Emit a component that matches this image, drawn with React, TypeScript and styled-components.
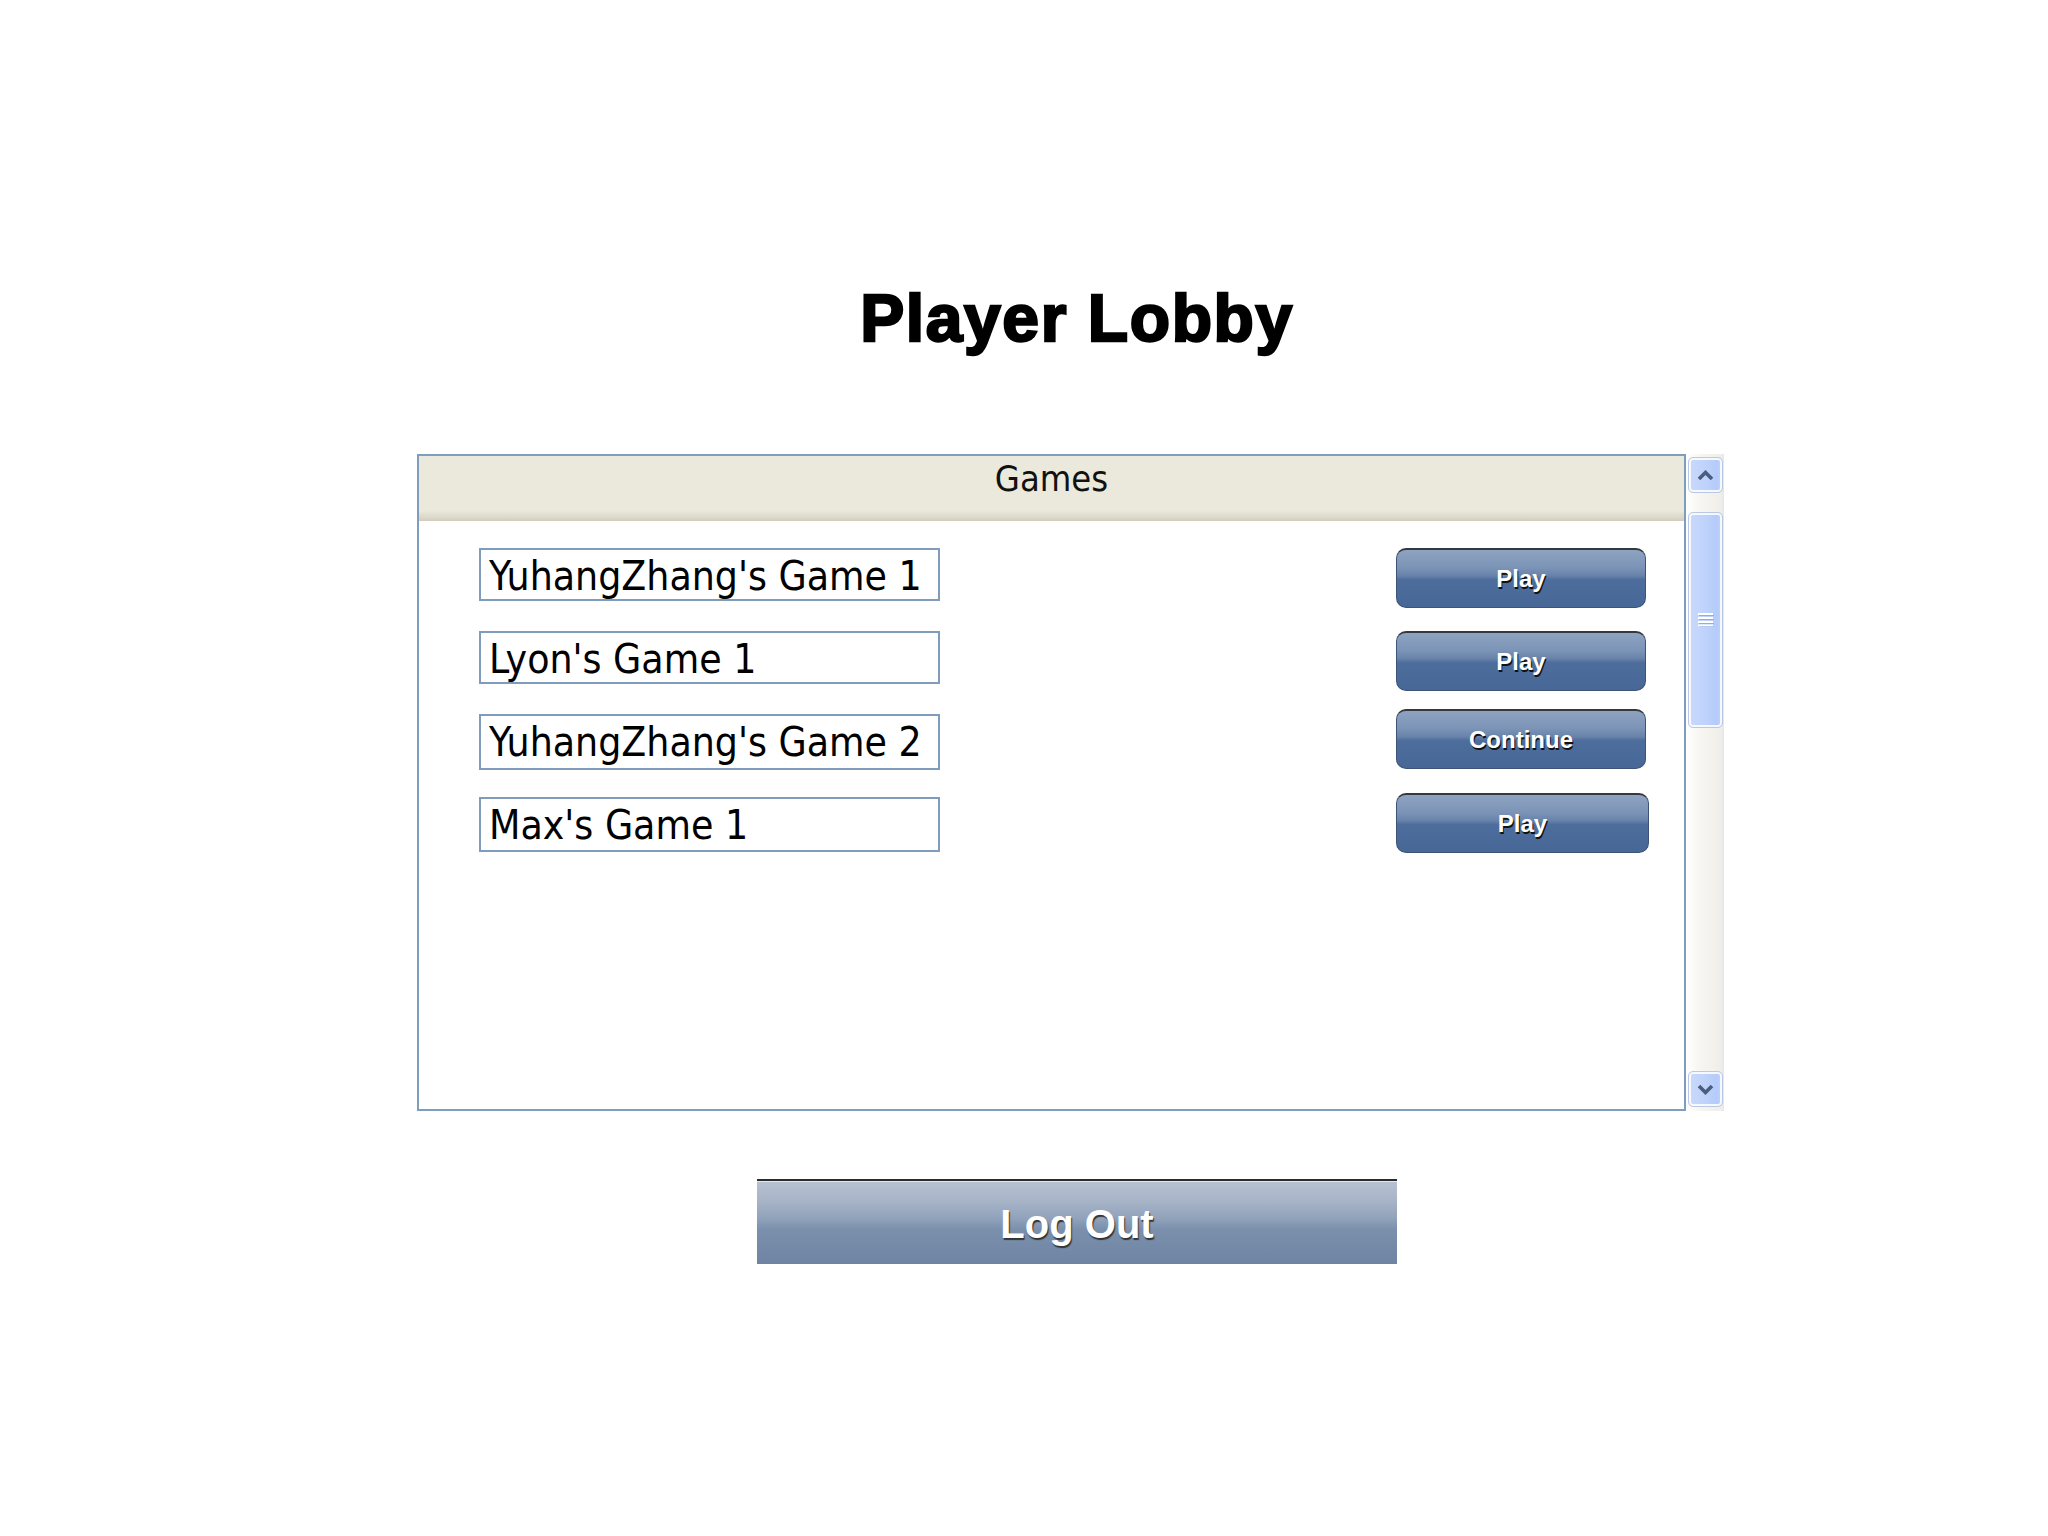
import React from "react";
import styled, { createGlobalStyle } from "styled-components";

const GlobalStyle = createGlobalStyle`
  html, body { margin: 0; padding: 0; background: #ffffff; }
  body { font-family: "Liberation Sans", Arial, sans-serif; }
  * { box-sizing: border-box; }
`;

const Page = styled.div`
  padding: 284px 0 0 417px;
  min-height: 1536px;
`;

const Column = styled.div`
  width: 1320px;
  display: flex;
  flex-direction: column;
  align-items: center;
`;

const Title = styled.h1`
  margin: 0 0 102px 0;
  height: 68px;
  line-height: 68px;
  font-family: "Liberation Sans", Arial, sans-serif;
  font-size: 66px;
  font-weight: 700;
  letter-spacing: 1.6px;
  -webkit-text-stroke: 2.4px #000;
  color: #000;
`;

const ListFrame = styled.div`
  align-self: flex-start;
  display: flex;
  width: 1307px;
  height: 657px;
`;

const Table = styled.div`
  width: 1269px;
  height: 100%;
  border: 2px solid #7f9dbd;
  display: flex;
  flex-direction: column;
  background: #fff;
`;

const Header = styled.div`
  height: 65px;
  background: linear-gradient(to bottom, #ebe9dc 0%, #ebe9dc 84%, #dcd8ca 94%, #d2cdbf 100%);
  text-align: center;
  font-family: "DejaVu Sans Condensed", "DejaVu Sans", sans-serif;
  font-stretch: condensed;
  font-size: 36px;
  line-height: 46px;
  color: #111;
`;

const Rows = styled.div`
  display: flex;
  flex-direction: column;
  gap: 23px;
  padding: 27px 34px 0 60px;
`;

const Row = styled.div`
  display: grid;
  grid-template-columns: 461px 1fr 254px;
  align-items: start;
  height: 60px;
`;

const NameBox = styled.div<{ $h: number }>`
  grid-column: 1;
  height: ${(p) => p.$h}px;
  border: 2px solid #7f9cbd;
  padding-left: 8px;
  font-family: "DejaVu Sans Condensed", "DejaVu Sans", sans-serif;
  font-stretch: condensed;
  font-size: 40.5px;
  line-height: 53px;
  color: #000;
  white-space: nowrap;
`;

const ActionButton = styled.button<{ $w: number; $shift: number }>`
  grid-column: 3;
  justify-self: start;
  width: ${(p) => p.$w}px;
  height: 60px;
  margin: ${(p) => p.$shift}px 0 0 0;
  padding: 0;
  border: 1px solid #3d5377;
  border-top: 2px solid #34383f;
  border-radius: 10px;
  background: linear-gradient(
    to bottom,
    #8ea3c0 0%,
    #7c94b7 30%,
    #6883aa 45%,
    #4d6d9c 52%,
    #476896 100%
  );
  color: #fff;
  font-family: "Liberation Sans", Arial, sans-serif;
  font-weight: 700;
  font-size: 24px;
  text-shadow: 1px 2px 0 #111;
  cursor: pointer;
`;

const Scrollbar = styled.div`
  width: 38px;
  height: 100%;
  display: flex;
  flex-direction: column;
  padding: 3px 1px 4px 2px;
  background: linear-gradient(to right, #ffffff 0%, #f7f6f2 35%, #efeee9 92%, #e4e6ea 100%);
`;

const ScrollPart = styled.div<{ $h: number; $gap?: number }>`
  height: ${(p) => p.$h}px;
  margin-top: ${(p) => p.$gap ?? 0}px;
  border: 1px solid #b9c8e4;
  border-radius: 5px;
  background: linear-gradient(to right, #c9d9fb 0%, #c0d3fb 45%, #b4cbfa 85%, #c4d4f6 100%);
  box-shadow: inset 0 0 0 2px rgba(255, 255, 255, 0.85);
  display: flex;
  align-items: center;
  justify-content: center;
`;

const Spacer = styled.div`
  flex: 1;
`;

const LogOut = styled.button`
  margin-top: 68px;
  width: 640px;
  height: 85px;
  padding: 3px 0 0 0;
  border: none;
  border-top: 2px solid #2b2b2b;
  box-shadow: inset 0 1px 0 #e2e7ee;
  background: linear-gradient(
    to bottom,
    #b7c2d2 0%,
    #a6b3c7 25%,
    #91a2bb 45%,
    #7b90ad 58%,
    #6f84a2 100%
  );
  color: #fff;
  font-family: "Liberation Sans", Arial, sans-serif;
  font-weight: 700;
  font-size: 40px;
  text-shadow: 1px 2px 1px #333;
  cursor: pointer;
`;

const Chevron = ({ up }: { up: boolean }) => (
  <svg width="17" height="11" viewBox="0 0 17 11">
    <polyline
      points={up ? "2,9 8.5,2.5 15,9" : "2,2 8.5,8.5 15,2"}
      fill="none"
      stroke="#4b5d7e"
      strokeWidth="3.6"
      strokeLinejoin="miter"
    />
  </svg>
);

const Grip = () => (
  <svg width="16" height="14" viewBox="0 0 16 14">
    {[0, 4, 8, 11.5].map((y) => (
      <g key={y}>
        <rect x="0" y={y} width="15" height="2" fill="#ffffff" />
        <rect x="1" y={y + 2} width="15" height="1" fill="#93acdf" />
      </g>
    ))}
  </svg>
);

const games = [
  { name: "YuhangZhang's Game 1", action: "Play", h: 53, w: 250, shift: 0 },
  { name: "Lyon's Game 1", action: "Play", h: 53, w: 250, shift: 0 },
  { name: "YuhangZhang's Game 2", action: "Continue", h: 56, w: 250, shift: -5 },
  { name: "Max's Game 1", action: "Play", h: 55, w: 253, shift: -4 },
];

export default function App() {
  return (
    <>
      <GlobalStyle />
      <Page>
        <Column>
          <Title>Player Lobby</Title>
          <ListFrame>
            <Table>
              <Header>Games</Header>
              <Rows>
                {games.map((g) => (
                  <Row key={g.name}>
                    <NameBox $h={g.h}>{g.name}</NameBox>
                    <ActionButton $w={g.w} $shift={g.shift}>
                      {g.action}
                    </ActionButton>
                  </Row>
                ))}
              </Rows>
            </Table>
            <Scrollbar>
              <ScrollPart $h={36}>
                <Chevron up />
              </ScrollPart>
              <ScrollPart $h={216} $gap={19}>
                <Grip />
              </ScrollPart>
              <Spacer />
              <ScrollPart $h={36}>
                <Chevron up={false} />
              </ScrollPart>
            </Scrollbar>
          </ListFrame>
          <LogOut>Log Out</LogOut>
        </Column>
      </Page>
    </>
  );
}
